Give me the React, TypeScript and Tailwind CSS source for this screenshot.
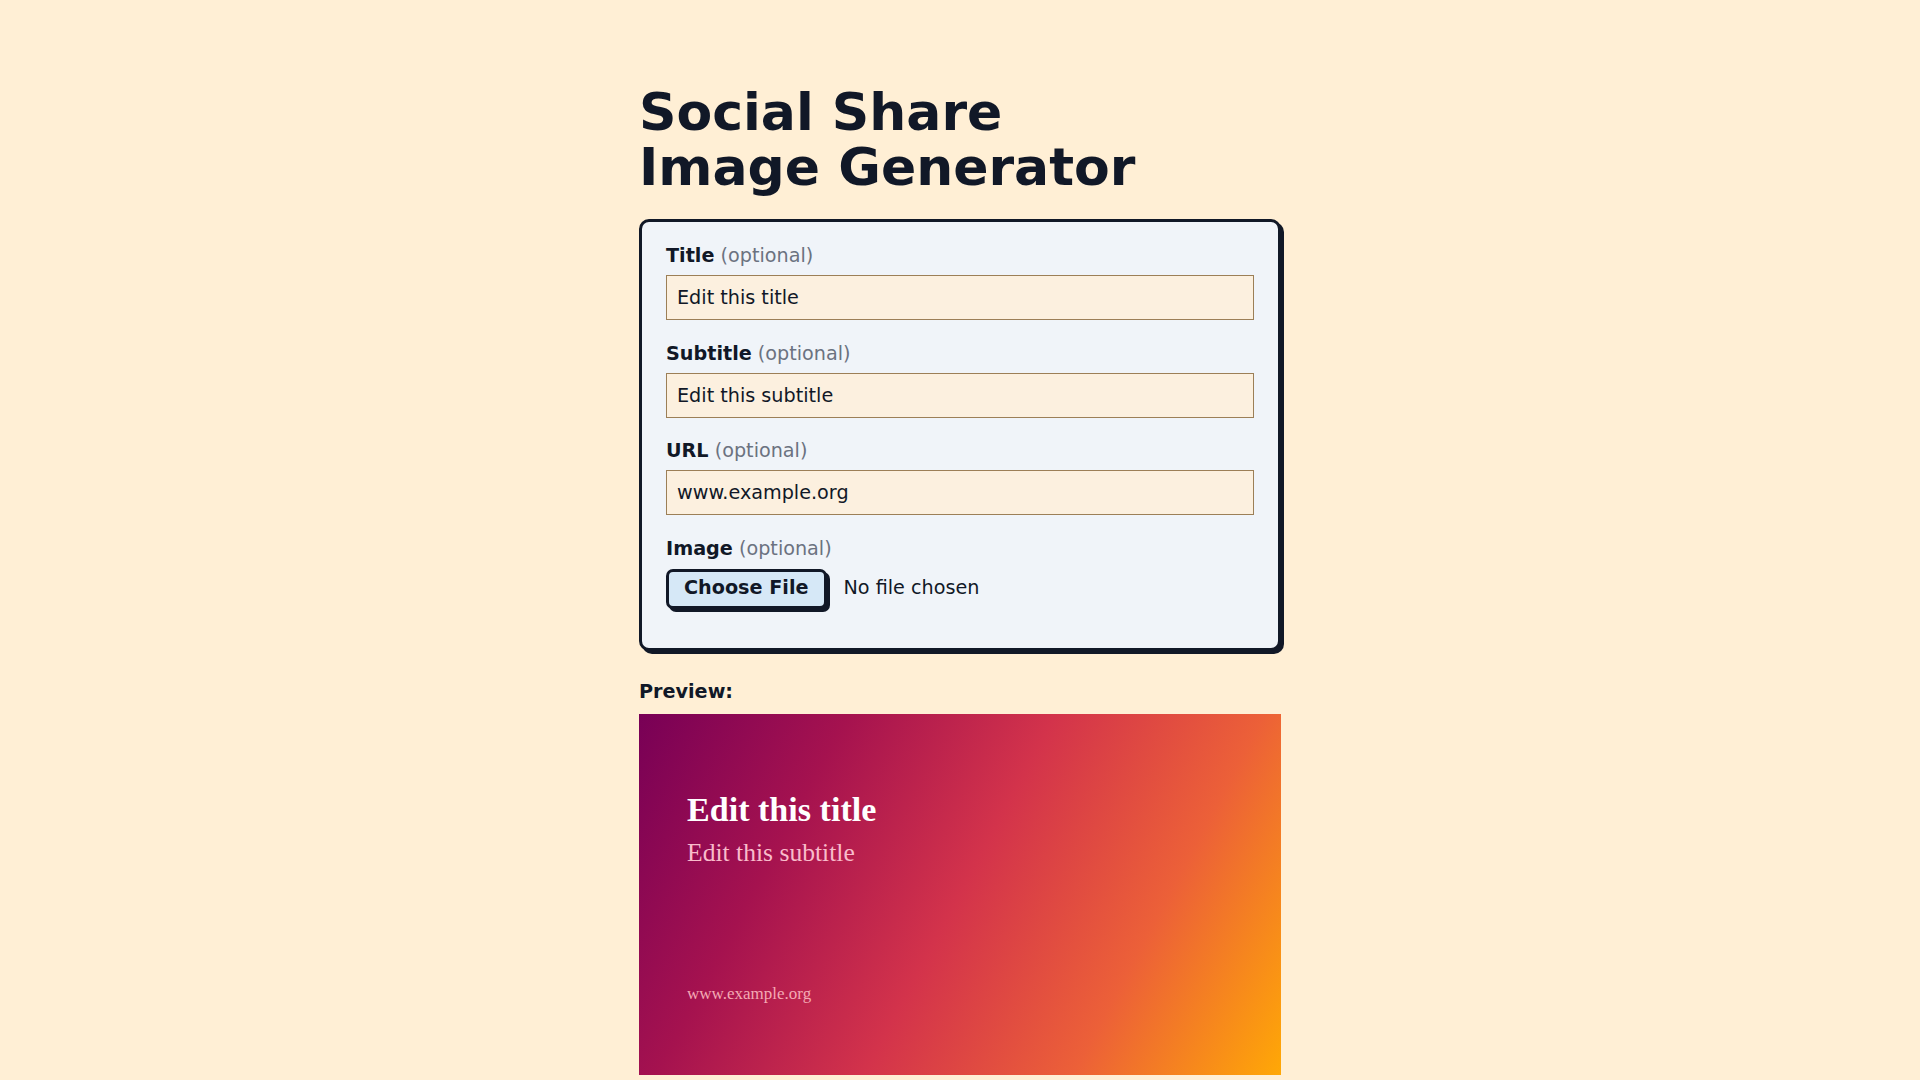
import { useState } from "react";

type Field = {
  id: string;
  label: string;
  value: string;
};

const fields: readonly Field[] = [
  { id: "title", label: "Title", value: "Edit this title" },
  { id: "subtitle", label: "Subtitle", value: "Edit this subtitle" },
  { id: "url", label: "URL", value: "www.example.org" },
];

function FieldLabel({ htmlFor, children }: { htmlFor?: string; children: string }) {
  return (
    <label htmlFor={htmlFor} className="mb-[5px] block text-[19.2px] leading-[28px] text-[#111827]">
      <span className="font-bold">{children}</span> <span className="text-[#6b7280]">(optional)</span>
    </label>
  );
}

export default function App() {
  const [values, setValues] = useState<Record<string, string>>(
    Object.fromEntries(fields.map((f) => [f.id, f.value])),
  );

  return (
    <div className="min-h-screen bg-[#ffefd5] pt-[85px] pb-16 font-['DejaVu_Sans',sans-serif] text-[#111827]">
      <main className="mx-auto w-[642px]">
        <h1 className="text-[52px] font-bold leading-[55px] text-[#111827]">
          Social Share
          <br />
          Image Generator
        </h1>

        <form className="mt-[24px] rounded-[10px] border-[3px] border-[#111827] bg-[#f0f4f9] px-[24px] pt-[20px] pb-[19.5px] shadow-[3px_3px_0_#111827]">
          {fields.map((field) => (
            <div key={field.id} className="mb-[19.5px]">
              <FieldLabel htmlFor={field.id}>{field.label}</FieldLabel>
              <input
                id={field.id}
                type="text"
                value={values[field.id]}
                onChange={(e) => setValues({ ...values, [field.id]: e.target.value })}
                className="block h-[45px] w-full border border-[#9c7f57] bg-[#fcf0df] px-[10px] font-['DejaVu_Sans',sans-serif] text-[19.2px] text-[#111827] outline-none"
              />
            </div>
          ))}

          <div className="mb-[19.5px]">
            <FieldLabel>Image</FieldLabel>
            <div className="flex items-center pt-px">
              <button
                type="button"
                className="flex h-[40px] items-center rounded-[7px] border-[3px] border-[#111827] bg-[#d6e8f7] px-[15px] text-[19.2px] font-bold text-[#111827] shadow-[3px_3px_0_#111827]"
              >
                Choose File
              </button>
              <span className="ml-[17px] text-[19.2px] text-[#111827]">No file chosen</span>
            </div>
          </div>
        </form>

        <p className="mt-[27px] mb-[8px] text-[19.2px] font-bold leading-[28px]">Preview:</p>

        <div className="flex h-[361px] flex-col bg-[linear-gradient(118deg,#780056_0%,#a5124f_25%,#d3334b_50%,#ec6038_75%,#ffa806_100%)] px-[48px] pt-[75px] pb-[71px] font-['Liberation_Serif',serif]">
          <div className="text-[34.1px] font-bold leading-[41px] text-white">{values.title}</div>
          <div className="mt-[7px] text-[25.6px] leading-[31px] text-[#f9bccb]">{values.subtitle}</div>
          <div className="mt-auto text-[17px] leading-[20px] text-[#f4a9b4]">{values.url}</div>
        </div>
      </main>
    </div>
  );
}
